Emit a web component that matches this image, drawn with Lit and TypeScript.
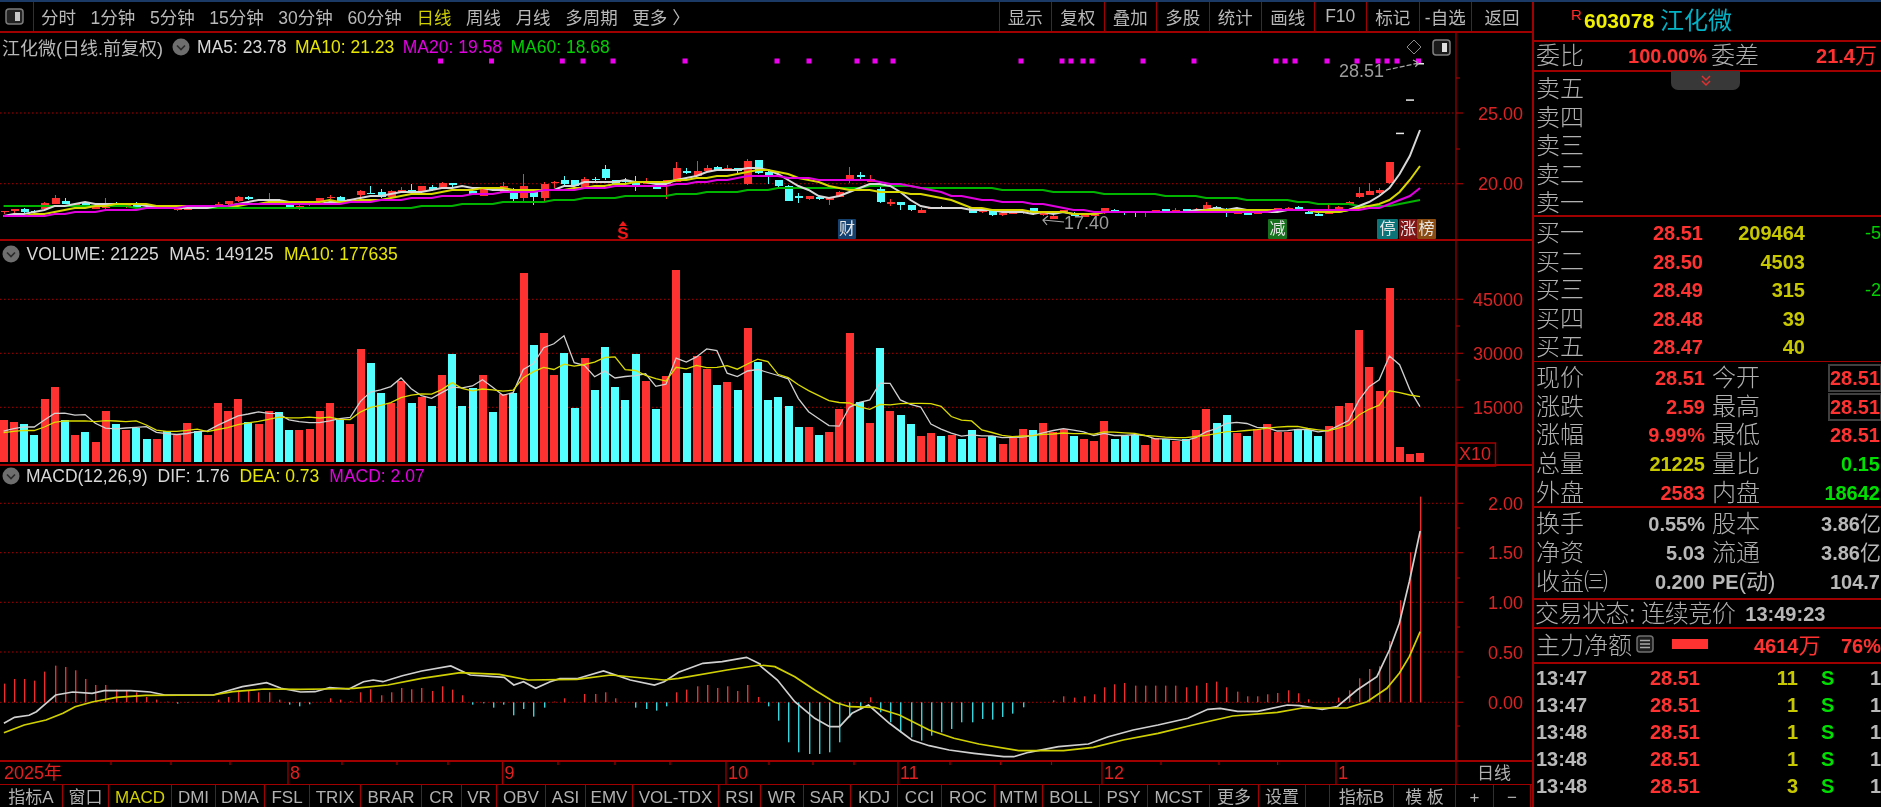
import { LitElement, html, css, svg } from 'lit';
import { customElement } from 'lit/decorators.js';

const cx = (i: number) => 3.6 + 10.19 * i;

const VOL = ("R540 R545 C553 C585 R477 R441 C540 R585 C576 R607 R513 C553 R571 C565 C598 R598 C572 R585 R549 C572 R585 R490 R513 R477 C545 R553 R513 C517 C571 R571 R567 R513 R490 C540 R553 R328 C369 C459 R490 R423 C490 R472 C499 R405 C342 C499 C445 R405 C517 R463 C459 R99 C315 R279 R405 C338 C504 R355 C450 C320 C441 C481 C342 R423 C508 R409 R90 C400 R347 R387 C436 R427 C450 R265 C365 " +
  "C481 C472 C499 C562 R562 C585 R576 R508 R279 C486 R549 C324 R513 C526 C553 R589 R580 C589 R585 C598 C571 R594 C589 R612 R594 R567 C571 R549 R576 R567 C589 R598 R603 R544 C598 C589 C585 R616 R594 C598 R603 C598 R571 R508 C549 C526 R580 C589 R567 R553 R576 R576 C567 C571 C589 R558 R499 R490 R270 R382 R454 R144 R621 R643 R639")
  .split(' ').map((s) => ({ up: s[0] === 'R', z: +s.slice(1) }));

const K: number[][] = [
  [212,214,212,222],[207,209,207,220],[207,216,205,218],[212,214,210,216],[188,207,186,208],[174,192,165,192],[183,192,175,193],[191,195,189,197],[188,195,187,196],[195,206,193,207],
  [188,204,175,206],[188,195,187,196],[196,202,195,203],[195,200,187,202],[200,206,198,207],[200,202,199,204],[200,202,198,203],[204,207,203,214],[204,205,203,209],[200,202,199,203],
  [200,202,199,203],[191,198,187,199],[183,193,182,194],[170,184,168,186],[170,178,169,179],[179,181,178,182],[178,182,160,188],[180,190,177,196],[195,202,194,203],[197,199,188,210],
  [190,196,186,197],[175,186,174,187],[170,172,166,178],[170,184,169,185],[178,183,176,184],[152,165,151,178],[158,160,138,160],[156,172,148,173],[152,172,151,173],[150,152,140,160],
  [150,156,133,157],[138,155,137,156],[141,150,135,152],[129,143,125,144],[129,136,128,143],[147,149,146,151],[152,163,150,165],[147,167,145,168],[143,150,142,151],[138,155,125,157],
  [147,177,145,188],[138,175,102,186],[150,172,148,195],[133,174,125,182],[125,130,124,145],[120,133,107,134],[120,137,119,138],[116,140,111,147],[116,118,111,125],[88,115,75,120],
  [120,133,119,134],[121,123,115,128],[130,132,107,152],[128,132,115,133],[138,146,137,148],[120,132,119,178],[84,125,66,126],[93,95,84,102],[93,107,62,108],[84,93,75,94],
  [80,93,79,94],[84,88,76,89],[85,93,84,100],[62,133,58,134],[60,100,59,102],[97,107,90,132],[120,137,119,148],[137,183,136,184],[168,170,160,188],[168,178,167,180],
  [172,178,170,180],[175,177,174,195],[155,170,154,172],[106,120,80,130],[105,107,96,117],[116,125,105,127],[148,187,140,188],[187,189,178,197],[186,195,185,210],[196,210,195,212],
  [210,218,205,219],[203,205,202,207],[203,207,198,208],[203,206,202,207],[203,205,202,206],[205,218,204,220],[210,216,209,218],[210,226,209,227],[220,226,219,228],[216,222,215,223],
  [214,220,213,222],[204,222,203,224],[216,226,215,228],[228,236,222,238],[210,218,209,220],[218,228,217,229],[225,230,224,232],[222,228,221,229],[205,220,204,221],[210,212,206,214],
  [215,217,214,225],[215,217,214,230],[215,217,214,230],[210,216,209,217],[208,218,207,219],[210,216,205,217],[208,216,207,217],[210,216,205,217],[196,210,187,211],[200,202,197,210],
  [212,214,205,232],[210,222,202,223],[218,225,217,226],[215,221,208,222],[210,216,209,217],[205,212,204,213],[203,205,202,212],[200,210,199,211],[215,222,214,223],[222,228,218,229],
  [218,222,195,223],[200,212,199,213],[185,195,183,196],[160,172,142,173],[152,165,130,166],[150,160,143,161],[67,130,66,131],[-22,-20,-22,-20],[-122,-120,-122,-120],[-231,-229,-231,-229],
];

const MACD = [56,70,70,65,92,110,106,96,70,52,52,38,34,30,16,8,2,-4,-1,1,0,8,16,36,36,30,30,8,-7,-12,-6,0,12,8,3,30,39,21,30,43,39,43,34,48,38,21,-7,-3,-16,-7,-39,-20,-43,-16,2,12,0,25,25,30,12,0,-16,-20,-25,-12,30,38,48,52,43,48,34,52,16,
  -12,-55,-120,-150,-155,-155,-150,-120,-45,-22,15,-30,-60,-90,-105,-115,-100,-90,-80,-60,-60,-50,-52,-44,-34,-15,0,0,6,18,14,18,24,45,54,58,50,50,50,50,50,45,50,58,62,45,32,18,18,24,28,36,27,9,0,0,14,36,72,100,108,184,306,450,617];

const DOTS = [440.6,491.5,562.3,583,613,685,777,809,857,875,893,1021,1062,1071,1083,1092,1143,1194,1276,1285,1295,1327,1357,1378,1387,1397,1418.5];

const W11: number[][] = [[8,250],[30,232],[60,226],[75,215],[95,190],[115,165],[150,156],[190,160],[215,152],[270,152],[310,156],[340,165],[440,165],[470,152],[500,140],[550,128],[580,145],[620,156],[650,155],[680,143],[720,147],[750,125],[770,120],[790,125],[830,107],[870,93],[930,78],[970,105],[1040,112],[1060,135],[1080,125],[1105,145],[1135,125],[1155,116],[1190,116],[1245,93],[1300,120],[1350,135],[1370,125],[1400,97],[1450,70],[1490,65],[1540,52],[1568,72]];
const Y11: number[][] = [[8,278],[50,255],[95,240],[130,220],[155,200],[190,186],[240,172],[300,166],[440,165],[480,155],[545,147],[620,148],[670,147],[730,145],[800,135],[870,115],[950,98],[1030,103],[1090,120],[1190,118],[1260,105],[1370,120],[1400,115],[1500,90],[1568,75]];
const W12: number[][] = [[0,587],[35,630],[70,695],[110,745],[140,770],[160,770],[185,730],[218,705],[260,760],[305,810],[340,827],[380,840],[430,850],[490,860],[510,860],[540,847],[600,830],[660,822],[700,800],[750,780],[800,765],[860,745],[900,718],[925,715],[960,724],[1000,724],[1060,705],[1085,707],[1130,718],[1160,710],[1200,660],[1240,620],[1265,540],[1285,460],[1305,335],[1327,183]];
const Y12: number[][] = [[0,585],[30,590],[70,620],[110,660],[150,697],[180,710],[230,712],[280,735],[340,780],[390,805],[440,822],[520,842],[610,842],[670,832],[730,810],[800,790],[870,765],[950,738],[1040,727],[1090,714],[1180,714],[1220,695],[1260,655],[1285,610],[1305,560],[1327,485]];

const ma = (src: number[], n: number, pad: number[]) => {
  const all = [...pad, ...src];
  return src.map((_, i) => {
    const end = pad.length + i + 1;
    const part = all.slice(Math.max(0, end - n), end);
    return part.reduce((a, b) => a + b, 0) / part.length;
  });
};
const pts = (ys: number[], step = 0) =>
  ys.map((y, i) => `${cx(i).toFixed(1)},${(step ? Math.round(y / step) * step : y).toFixed(1)}`).join(' ');

const closes = K.map((k, i) => 140 + (VOL[i].up ? k[0] : k[1]) / 3);
const prePrice = [...Array(40).fill(200), ...Array(20).fill(217)];
const volH = VOL.map((v) => 462 - (240 + v.z / 3));
const preVol = Array(9).fill(28);

const UP = '#ff3232';
const DOWN = '#54ffff';

const gridLine = (y: number) => svg`<line class="dot" x1="0" x2="1456" y1=${y} y2=${y}></line>`;
const tick = (y: number, len = 7) => svg`<line class="rl" x1="1456" x2=${1456 + len} y1=${y} y2=${y}></line>`;
const axisText = (y: number, t: string) => svg`<text class="ax" x="1523" y=${y + 6.5} text-anchor="end">${t}</text>`;

const tag = (x: number, w: number, fill: string, t: string) => svg`
  <rect x=${x} y="219" width=${w} height="20" rx="1" fill=${fill}></rect>
  <text class="tg" x=${x + w / 2} y="234" text-anchor="middle">${t}</text>`;

function priceSvg() {
  return svg`
    ${[113, 183.7].map((y) => gridLine(y))}
    <line class="rl" x1="1456" x2="1456" y1="33" y2="239"></line>
    ${[113, 183.7].map((y) => tick(y))}
    ${[78, 149].map((y) => tick(y, 4))}
    ${axisText(113, '25.00')}${axisText(183.7, '20.00')}
    ${DOTS.map((x) => svg`<rect x=${x - 2.5} y="58.5" width="5" height="5" fill="#f000f0"></rect>`)}
    ${K.map((k, i) => {
      const c = VOL[i].up ? UP : DOWN;
      const x = Math.round(cx(i));
      if (i >= 137) return svg`<rect x=${x - 4} y=${140 + k[0] / 3} width="8" height="1.5" fill="#e8e8e8"></rect>`;
      return svg`
        <rect class="cr" x=${x} y=${140 + k[2] / 3} width="1" height=${(k[3] - k[2]) / 3} fill=${c}></rect>
        <rect class="cr" x=${x - 3.5} y=${140 + k[0] / 3} width="8" height=${Math.max(1.5, (k[1] - k[0]) / 3)} fill=${c}></rect>`;
    })}
    <polyline class="ln2" stroke="#00b400" points=${pts(ma(closes, 60, prePrice), 2)}></polyline>
    <polyline class="ln2" stroke="#d8d8d8" points=${pts(ma(closes, 5, prePrice), 2)}></polyline>
    <polyline class="ln2" stroke="#d8d800" points=${pts(ma(closes, 10, prePrice), 2)}></polyline>
    <polyline class="ln2" stroke="#e000e0" points=${pts(ma(closes, 20, prePrice), 2)}></polyline>
    <text class="mk" x="1339" y="77">28.51</text>
    <path class="ar" stroke-dasharray="5 2" d="M1386 70 L1419 63 M1413 60 L1419 63 L1414 68"></path>
    <text class="mk" x="1064" y="229">17.40</text>
    <path class="ar" d="M1064 222 L1043 220 M1048 216 L1043 220 L1047 225"></path>
    <path d="M623 221 L627 226 L619 226 Z" fill="#f01818"></path>
    <text class="s" x="623" y="238.5" text-anchor="middle">S</text>
    ${tag(838, 18, '#16406e', '财')}
    ${tag(1268, 19, '#16701e', '减')}
    ${tag(1377, 21, '#0a7478', '停')}
    ${tag(1399, 18, '#801414', '涨')}
    ${tag(1417, 19, '#8a4c12', '榜')}
    <path d="M1414 40 L1421 47 L1414 54 L1407 47 Z" fill="none" stroke="#8a8a8a"></path>
    <rect x="1433" y="40" width="17" height="15" rx="3" fill="#1a1a1a" stroke="#808080" stroke-width="1.5"></rect>
    <rect x="1442" y="43" width="5" height="9" fill="#e0e0e0"></rect>
  `;
}

function volSvg() {
  return svg`
    ${[299.3, 353.3, 407.3].map((y) => gridLine(y))}
    <line class="rl" x1="1456" x2="1456" y1="241" y2="464"></line>
    ${[299.3, 353.3, 407.3].map((y) => tick(y))}
    ${[326, 380].map((y) => tick(y, 4))}
    ${axisText(299.3, '45000')}${axisText(353.3, '30000')}${axisText(407.3, '15000')}
    ${VOL.map((v, i) => svg`<rect class="cr" x=${Math.round(cx(i) - 3.7)} y=${240 + v.z / 3} width="8" height=${222 - v.z / 3} fill=${v.up ? UP : DOWN}></rect>`)}
    <polyline class="th" stroke="#d0d0d0" points=${pts(ma(volH, 5, preVol).map((h) => 462 - h))}></polyline>
    <polyline class="th" stroke="#dcdc00" stroke-width="1.6" points=${pts(ma(volH, 10, preVol).map((h) => 462 - h))}></polyline>
    <rect x="1456.5" y="443" width="39" height="23" fill="none" stroke="#a00000" stroke-width="1.5"></rect>
    <text class="ax" x="1459" y="460">X10</text>
  `;
}

function macdSvg() {
  const p = (a: number[][], b: number[][]) =>
    [...a.map(([x, z]) => `${(x / 2.063).toFixed(1)},${(640 + z / 3).toFixed(1)}`), ...b.map(([x, z]) => `${(760 + x / 2.01).toFixed(1)},${(470 + z / 3).toFixed(1)}`)].join(' ');
  const ys = [503.3, 552.7, 602.3, 652, 702.3];
  const ls = ['2.00', '1.50', '1.00', '0.50', '0.00'];
  return svg`
    ${ys.map((y) => gridLine(y))}
    <line class="rl2" x1="1456" x2="1456" y1="466" y2="760"></line>
    ${ys.map((y) => tick(y))}
    ${[528, 578, 627, 677, 726].map((y) => tick(y, 4))}
    ${ys.map((y, i) => axisText(y, ls[i]))}
    ${MACD.map((m, i) => svg`<rect x=${Math.round(cx(i))} y=${m > 0 ? 702.3 - m / 3 : 702.3} width="1.4" height=${Math.abs(m) / 3} fill=${m > 0 ? '#e83030' : '#36d4dc'}></rect>`)}
    <polyline class="ln" stroke="#d0d0d0" points=${p(W11, W12)}></polyline>
    <polyline class="ln" stroke="#d0d000" points=${p(Y11, Y12)}></polyline>
  `;
}

function dateSvg() {
  const major: [number, string][] = [[288, '8'], [502.5, '9'], [726, '10'], [898, '11'], [1102, '12'], [1336, '1']];
  const minor = [111, 171, 230, 342, 397, 448, 558, 615, 670, 769, 813, 854, 950, 1000.6, 1051.5, 1161, 1219, 1277.6];
  return svg`
    ${minor.map((x) => svg`<line class="rl" x1=${x} x2=${x} y1="0" y2="3"></line>`)}
    ${major.map(([x]) => svg`<line class="rl" x1=${x} x2=${x} y1="0" y2="22"></line>`)}
    <text class="dt" x="4" y="17">2025年</text>
    ${major.map(([x, t]) => svg`<text class="dt" x=${x + 2} y="17">${t}</text>`)}
    <line class="rl" x1="1456" x2="1456" y1="0" y2="22"></line>
    <text class="dl" x="1494" y="17" text-anchor="middle">日线</text>
  `;
}

const chevron = html`<svg class="chev" width="18" height="18" viewBox="0 0 18 18"><circle cx="9" cy="9" r="8.5" fill="#6e6e6e"></circle><path d="M5 7.5 L9 11.5 L13 7.5" fill="none" stroke="#2a2a2a" stroke-width="1.6"></path></svg>`;

const NAV = ['分时', '1分钟', '5分钟', '15分钟', '30分钟', '60分钟', '日线', '周线', '月线', '多周期', '更多 〉'];
const TOOLS = ['显示', '复权', '叠加', '多股', '统计', '画线', 'F10', '标记', '-自选', '返回'];
const TABS: [string, number][] = [['指标A',63],['窗口',46],['MACD',63],['DMI',44],['DMA',49],['FSL',45],['TRIX',51],['BRAR',61],['CR',40],['VR',35],['OBV',49],['ASI',40],['EMV',47],['VOL-TDX',86],['RSI',42],['WR',43],['SAR',47],['KDJ',47],['CCI',44],['ROC',53],['MTM',48],['BOLL',57],['PSY',48],['MCST',62],['更多',49],['设置',47],['',24],['指标B',64],['模 板',62],['+',38],['−',37]];

const BUY = [['买一','28.51','209464','-5'],['买二','28.50','4503',''],['买三','28.49','315','-2'],['买四','28.48','39',''],['买五','28.47','40','']];
const TICKS = [['13:47','11'],['13:47','1'],['13:48','1'],['13:48','1'],['13:48','3']];

@customElement('app-root')
export class AppRoot extends LitElement {
  static styles = css`
    :host { display: block; width: 1881px; height: 807px; overflow: hidden; background: #000; color: #b8b8b8; position: relative;
      font-family: "Liberation Sans", "Noto Sans CJK SC", sans-serif; }
    * { box-sizing: border-box; }
    .edge { height: 2px; background: #1c3a66; }
    .app { display: flex; height: 805px; filter: blur(0.35px); }
    .left { width: 1532px; flex: none; display: flex; flex-direction: column; }
    .top { height: 29px; margin-top: -2px; padding-top: 2px; display: flex; align-items: center; border-bottom: 2px solid #a00000; font-size: 17.5px; flex: none; box-sizing: content-box; }
    .ico { width: 34px; height: 29px; border-right: 1.5px solid #a00000; display: flex; align-items: center; justify-content: center; padding-right: 4px; flex: none; }
    .nav { display: flex; gap: 14.6px; padding-left: 7px; white-space: nowrap; }
    .nav .on { color: #d0d000; }
    .tools { margin-left: auto; display: flex; height: 100%; }
    .tools span { width: 52.5px; display: flex; align-items: center; justify-content: center; border-left: 1.5px solid #a00000; }
    .tools span:last-child { width: 61px; }
    .pane { position: relative; flex: none; border-bottom: 2px solid #a00000; box-sizing: content-box; }
    .p1 { height: 206px; } .p2 { height: 223px; } .p3 { height: 294px; }
    .pane svg.plot { position: absolute; left: 0; top: 0; display: block; overflow: visible; }
    .head { position: relative; display: flex; align-items: center; white-space: nowrap; font-size: 17.5px; }
    .p1 .head { height: 28px; padding-left: 2px; }
    .p2 .head { height: 26px; padding-left: 2px; gap: 10.5px; }
    .p3 .head { height: 20px; padding-left: 2px; gap: 10px; }
    .chev { flex: none; }
    .p1 .title { font-size: 18px; width: 163px; flex: none; }
    .p1 .chev { margin: 0 7px 0 7px; }
    .p1 .ma { margin-right: 8.5px; }
    .p2 .head .first, .p3 .head .first { margin-left: -4px; }
    .w { color: #d8d8d8; } .y { color: #e6e600; } .m { color: #e000e0; } .g { color: #00d000; }
    .date { height: 22px; border-bottom: 1px solid #a00000; flex: none; box-sizing: content-box; }
    .date svg { display: block; overflow: visible; }
    .tabs { display: flex; height: 22px; flex: none; font-size: 17px; color: #b0b0b0; white-space: nowrap; overflow: hidden; }
    .tabs span { border-right: 1.5px solid #a00000; display: flex; align-items: center; justify-content: center; overflow: hidden; flex: none; padding-top: 3px; line-height: 19px; }
    .tabs .on { color: #d0d000; }
    .dot { stroke: #a80000; stroke-width: 1; stroke-dasharray: 1.5 2.5; }
    .rl { stroke: #a00000; stroke-width: 1.2; }
    .rl2 { stroke: #a00000; stroke-width: 2; }
    .cr { shape-rendering: crispEdges; }
    .ln { fill: none; stroke-width: 1.7; }
    .ln2 { fill: none; stroke-width: 2; }
    .th { fill: none; stroke-width: 1.3; }
    .ax { fill: #d82424; font-size: 18px; font-family: "Liberation Sans", sans-serif; }
    .dt { fill: #e02020; font-size: 18px; font-family: "Liberation Sans", "Noto Sans CJK SC", sans-serif; }
    .dl { fill: #b0b0b0; font-size: 17px; font-family: "Noto Sans CJK SC", sans-serif; }
    .mk { fill: #9c9c9c; font-size: 18px; font-family: "Liberation Sans", sans-serif; }
    .ar { fill: none; stroke: #a8a8a8; stroke-width: 1.2; }
    .s { fill: #f01818; font-size: 17px; font-weight: bold; font-family: "Liberation Sans", sans-serif; }
    .tg { fill: #e8e8e8; font-size: 16px; font-family: "Noto Sans CJK SC", sans-serif; }

    .right { width: 349px; flex: none; border-left: 2px solid #a00000; overflow: hidden; font-size: 24px; line-height: 28px; position: relative; }
    .sec { border-bottom: 2px solid #a00000; padding-left: 2px; white-space: nowrap; flex: none; }
    .hd { height: 40px; display: flex; align-items: center; padding-left: 37px; }
    .hd .r { color: #ff2a2a; font-size: 15px; line-height: 15px; align-self: flex-start; margin-top: 5px; width: 13px; }
    .hd .code { color: #f0f000; font-size: 21px; font-weight: bold; width: 76px; }
    .hd .nm { color: #00b4c8; font-size: 24px; }
    .lb { color: #b0b0b0; font-weight: 300; }
    .num { font-size: 20px; font-weight: bold; text-align: right; line-height: 28px; }
    .red { color: #ff3232; } .ye { color: #c8c800; } .gr { color: #00e000; } .gy { color: #b8b8b8; }
    .wb { height: 30px; display: grid; grid-template-columns: 84px 87px 90px 80px; align-items: center; }
    .wb .l2 { padding-left: 4px; }
    .wbv { display: flex; justify-content: flex-end; align-items: baseline; }
    .sell { height: 145px; padding-top: 3px; }
    .sell .lb { display: block; height: 28.5px; line-height: 28.5px; }
    .handle { position: absolute; left: 137px; top: 69px; width: 69px; height: 19px; background: #383838; border-radius: 0 0 7px 7px; display: flex; align-items: center; justify-content: center; }
    .buy { height: 145px; padding-top: 2px; border-bottom-width: 1px; }
    .row { display: grid; height: 28.5px; align-items: center; grid-template-columns: 104px 63px 102px 60px 20px; }
    .row .d { font-size: 18px; color: #00d000; grid-column: 5; text-align: left; font-weight: normal; }
    .st { height: 146px; padding-top: 1.5px; }
    .kv { display: grid; height: 28.5px; align-items: center; grid-template-columns: 84px 85px 91px 84px; }
    .st .kv { height: 28.7px; }
    .kv .l2 { padding-left: 7px; }
    .boxed { outline: 2px solid #404040; outline-offset: 0; line-height: 24px; height: 24px; margin-left: 34px; padding-right: 0; }
    .st2 { height: 92px; padding-top: 1px; }
    .st2 .kv { height: 29.3px; }
    .over { margin-right: -1px; }
    .over .wan { font-size: 21px; }
    .pe { text-align: left; }
    .status { height: 29px; display: flex; align-items: center; padding-left: 1px; }
    .status .lb { letter-spacing: -0.5px; }
    .status .num { margin-left: 10px; }
    .zl { height: 35px; display: flex; align-items: center; position: relative; }
    .zl .bar { width: 36px; height: 10px; background: #ff3232; margin-left: 18px; margin-top: -4px; flex: none; }
    .zl svg { margin-left: 4px; flex: none; margin-top: -3px; }
    .zl .v1 { margin-left: 46px; width: 68px; }
    .zl .v2 { margin-left: 20px; }
    .zl .num { display: flex; align-items: baseline; white-space: nowrap; }
    .wan { font-size: 22px; font-weight: normal; }
    .tk { padding: 1px 0 0 2px; }
    .tr { display: grid; height: 27px; align-items: center; grid-template-columns: 104px 60px 104px 32px 45px; font-size: 20px; font-weight: bold; line-height: 27px; }
    .tr > span:nth-child(2) { text-align: right; }
    .tr .v { text-align: right; padding-right: 6px; }
    .tr .s2 { padding-left: 17px; }
    .tr .one { text-align: right; }
  `;

  render() {
    return html`
      <div class="edge"></div>
      <div class="app">
        <div class="left">
          <div class="top">
            <div class="ico">
              <svg width="19" height="17" viewBox="0 0 19 17"><rect x="1" y="1" width="17" height="15" rx="3" fill="#222" stroke="#7c7c7c" stroke-width="1.5"></rect><rect x="10" y="4" width="5" height="9" fill="#c8c8c8"></rect></svg>
            </div>
            <div class="nav">${NAV.map((t) => html`<span class=${t === '日线' ? 'on' : ''}>${t}</span>`)}</div>
            <div class="tools">${TOOLS.map((t) => html`<span>${t}</span>`)}</div>
          </div>
          <div class="pane p1">
            <svg class="plot" width="1532" height="206" viewBox="0 33 1532 206">${priceSvg()}</svg>
            <div class="head">
              <span class="title">江化微(日线.前复权)</span>${chevron}
              <span class="ma w">MA5: 23.78</span><span class="ma y">MA10: 21.23</span><span class="ma m">MA20: 19.58</span><span class="ma g">MA60: 18.68</span>
            </div>
          </div>
          <div class="pane p2">
            <svg class="plot" width="1532" height="223" viewBox="0 241 1532 223">${volSvg()}</svg>
            <div class="head">
              ${chevron}<span class="w first">VOLUME: 21225</span><span class="w">MA5: 149125</span><span class="y">MA10: 177635</span>
            </div>
          </div>
          <div class="pane p3">
            <svg class="plot" width="1532" height="294" viewBox="0 466 1532 294">${macdSvg()}</svg>
            <div class="head">
              ${chevron}<span class="w first">MACD(12,26,9)</span><span class="w">DIF: 1.76</span><span class="y">DEA: 0.73</span><span class="m">MACD: 2.07</span>
            </div>
          </div>
          <div class="date"><svg width="1532" height="22" viewBox="0 0 1532 22">${dateSvg()}</svg></div>
          <div class="tabs">
            ${TABS.map(([t, w]) => html`<span class=${t === 'MACD' ? 'on' : ''} style="width:${w}px">${t}</span>`)}
          </div>
        </div>
        <div class="right">
          <div class="sec hd"><span class="r">R</span><span class="code">603078</span><span class="nm">江化微</span></div>
          <div class="sec wb">
            <span class="lb">委比</span><span class="num red">100.00%</span><span class="lb l2">委差</span>
            <span class="num red wbv">21.4<span class="wan">万</span></span>
          </div>
          <div class="sec sell">
            ${['卖五', '卖四', '卖三', '卖二', '卖一'].map((t) => html`<span class="lb">${t}</span>`)}
          </div>
          <div class="handle"><svg width="14" height="12" viewBox="0 0 14 12"><path d="M3 1 L7 5 L11 1 M3 6 L7 10 L11 6" fill="none" stroke="#e03030" stroke-width="1.5"></path></svg></div>
          <div class="sec buy">
            ${BUY.map(([a, b, c, d]) => html`<div class="row"><span class="lb">${a}</span><span class="num red">${b}</span><span class="num ye">${c}</span><span></span><span class="d">${d}</span></div>`)}
          </div>
          <div class="sec st">
            <div class="kv"><span class="lb">现价</span><span class="num red">28.51</span><span class="lb l2">今开</span><span class="num red boxed">28.51</span></div>
            <div class="kv"><span class="lb">涨跌</span><span class="num red">2.59</span><span class="lb l2">最高</span><span class="num red boxed">28.51</span></div>
            <div class="kv"><span class="lb">涨幅</span><span class="num red">9.99%</span><span class="lb l2">最低</span><span class="num red">28.51</span></div>
            <div class="kv"><span class="lb">总量</span><span class="num ye">21225</span><span class="lb l2">量比</span><span class="num gr">0.15</span></div>
            <div class="kv"><span class="lb">外盘</span><span class="num red">2583</span><span class="lb l2">内盘</span><span class="num gr">18642</span></div>
          </div>
          <div class="sec st2">
            <div class="kv"><span class="lb">换手</span><span class="num gy">0.55%</span><span class="lb l2">股本</span><span class="num gy over">3.86<span class="wan">亿</span></span></div>
            <div class="kv"><span class="lb">净资</span><span class="num gy">5.03</span><span class="lb l2">流通</span><span class="num gy over">3.86<span class="wan">亿</span></span></div>
            <div class="kv"><span class="lb">收益㈢</span><span class="num gy">0.200</span><span class="l2 num gy pe">PE<span class="wan">(动)</span></span><span class="num gy">104.7</span></div>
          </div>
          <div class="sec status"><span class="lb">交易状态: 连续竞价</span><span class="num gy">13:49:23</span></div>
          <div class="sec zl">
            <span class="lb">主力净额</span>
            <svg width="18" height="18" viewBox="0 0 18 18"><rect x="1" y="1" width="16" height="16" rx="3" fill="#1c1c1c" stroke="#707070" stroke-width="1.5"></rect><path d="M4 5.5h10M4 9h10M4 12.5h10" stroke="#a8a8a8" stroke-width="1.4"></path></svg>
            <span class="bar"></span>
            <span class="num red v1">4614<span class="wan">万</span></span>
            <span class="num red v2">76%</span>
          </div>
          <div class="tk">
            ${TICKS.map(([t, v]) => html`<div class="tr"><span class="gy">${t}</span><span class="red">28.51</span><span class="ye v">${v}</span><span class="gr s2">S</span><span class="gy one">1</span></div>`)}
          </div>
        </div>
      </div>
    `;
  }
}
